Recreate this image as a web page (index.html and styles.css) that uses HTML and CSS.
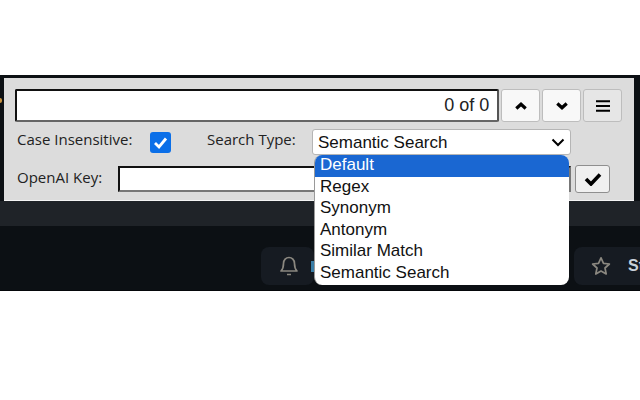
FILE: index.html
```html
<!DOCTYPE html>
<html>
    <head>
        <meta charset="UTF-8">
        <title>Search panel</title>
        <link rel="stylesheet" href="styles.css">
    </head>
    <body>
        <div class="stage">
            <div class="edgeMark"></div>
            <div class="panel">
                <div class="searchRow">
                    <div class="searchBox">0 of 0</div>
                    <button class="btn">
                        <svg width="12" height="8" viewBox="0 0 12 8"><path d="M1.3 6.5 L6 2.2 L10.7 6.5" fill="none" stroke="#000" stroke-width="3.2"/></svg>
                    </button>
                    <button class="btn">
                        <svg width="12" height="8" viewBox="0 0 12 8"><path d="M1.3 1.5 L6 5.8 L10.7 1.5" fill="none" stroke="#000" stroke-width="3.2"/></svg>
                    </button>
                    <button class="btn btnMenu">
                        <svg width="14" height="12" viewBox="0 0 14 12"><path d="M0 1.2 H14 M0 6 H14 M0 10.8 H14" fill="none" stroke="#000" stroke-width="2"/></svg>
                    </button>
                </div>
                <div class="optionsRow">
                    <span class="lbl lblCase">Case Insensitive:</span>
                    <span class="checkbox">
                        <svg width="21" height="21" viewBox="0 0 21 21"><path d="M5 11 L9 15 L16 6.5" fill="none" stroke="#fff" stroke-width="2.8"/></svg>
                    </span>
                    <span class="lbl lblType">Search Type:</span>
                    <div class="selectBox">
                        <span>Semantic Search</span>
                        <svg width="14" height="9" viewBox="0 0 14 9"><path d="M1.5 1.5 L7 7 L12.5 1.5" fill="none" stroke="#000" stroke-width="2"/></svg>
                    </div>
                </div>
                <div class="keyRow">
                    <span class="lbl lblKey">OpenAI Key:</span>
                    <div class="keyBox"></div>
                    <button class="btn btnOk">
                        <svg width="18" height="14" viewBox="0 0 18 14"><path d="M2 7 L7 12 L16 2.5" fill="none" stroke="#000" stroke-width="3.6"/></svg>
                    </button>
                </div>
            </div>

            <div class="dropdown">
                <div class="opt optSel">Default</div>
                <div class="opt">Regex</div>
                <div class="opt">Synonym</div>
                <div class="opt">Antonym</div>
                <div class="opt">Similar Match</div>
                <div class="opt">Semantic Search</div>
            </div>

            <div class="band"></div>
            <div class="toolbar">
                <div class="pill pillBell">
                    <svg width="20" height="22" viewBox="0 0 20 22"><path d="M2 16 C4 14 4.5 12 4.5 8.5 C4.5 5 7 2.5 10 2.5 C13 2.5 15.5 5 15.5 8.5 C15.5 12 16 14 18 16 Z M8 19.5 H12" fill="none" stroke="#8b8880" stroke-width="1.7" stroke-linejoin="round"/></svg>
                    <span class="blueMark"></span>
                </div>
                <div class="pill pillStar">
                    <svg width="20" height="20" viewBox="0 0 20 20"><path d="M10 1.8 L12.5 7.3 L18.4 8 L14 12 L15.2 18 L10 15 L4.8 18 L6 12 L1.6 8 L7.5 7.3 Z" fill="none" stroke="#8b8880" stroke-width="1.7" stroke-linejoin="round"/></svg>
                    <b>St</b>
                </div>
            </div>
        </div>
    </body>
</html>
```

FILE: styles.css
```css
body {
    margin: 0;
    background: #ffffff;
    font-family: "Open Sans", "Noto Sans", sans-serif;
    font-size: 15px;
    color: #000000;
}

.stage {
    position: relative;
    margin-top: 75px;
    height: 216px;
    background: #0c1014;
    overflow: hidden;
    border-bottom: 1px solid #05070a;
    box-sizing: border-box;
}

.edgeMark {
    position: absolute;
    left: 0;
    top: 23px;
    width: 2px;
    height: 5px;
    border-radius: 0 2px 2px 0;
    background: #c9933f;
}

.panel {
    position: absolute;
    left: 4px;
    top: 3px;
    width: 630px;
    height: 123px;
    box-sizing: border-box;
    padding: 11px 12px 0 11px;
    background: #dcdcdc;
    border-bottom: 1px solid #f4f4f4;
    z-index: 1;
}

.searchRow {
    display: flex;
    gap: 2px;
    height: 33px;
}

.searchBox {
    width: 485px;
    box-sizing: border-box;
    border: 2px solid #111111;
    border-bottom-color: #666666;
    border-right-color: #555555;
    border-radius: 2px;
    background: #ffffff;
    font-family: "Liberation Sans", Arial, sans-serif;
    font-size: 18px;
    line-height: 29px;
    text-align: right;
    padding-right: 8px;
    color: #222222;
}

.btn {
    width: 39px;
    height: 33px;
    padding: 0;
    display: flex;
    align-items: center;
    justify-content: center;
    border: 1px solid #bdbdbd;
    border-radius: 3px;
    background: #f8f8f8;
}

.btnMenu {
    background: #e6e6e6;
}

.optionsRow {
    display: flex;
    align-items: center;
    height: 26px;
    margin-top: 7px;
}

.lbl {
    color: #222222;
    white-space: nowrap;
}

.lblCase {
    margin-left: 2px;
    width: 133px;
    position: relative;
    top: -3px;
}

.checkbox {
    width: 21px;
    height: 21px;
    border-radius: 3px;
    background: #0b6fe8;
    margin-top: 1px;
}

.checkbox svg {
    display: block;
}

.lblType {
    margin-left: 36px;
    width: 105px;
    position: relative;
    top: -3px;
}

.selectBox {
    width: 259px;
    height: 26px;
    box-sizing: border-box;
    display: flex;
    align-items: center;
    justify-content: space-between;
    padding: 1px 5px 0 5px;
    background: #ffffff;
    border: 1px solid #b5b5b5;
    border-radius: 3px;
    font-family: "Liberation Sans", Arial, sans-serif;
    font-size: 17px;
    color: #111111;
}

.keyRow {
    display: flex;
    align-items: center;
    margin-top: 10px;
}

.lblKey {
    margin-left: 2px;
    width: 101px;
    position: relative;
    top: -2px;
}

.keyBox {
    width: 453px;
    height: 26px;
    box-sizing: border-box;
    background: #ffffff;
    border: 2px solid #111111;
    border-bottom-color: #777777;
    border-right-color: #777777;
}

.btnOk {
    width: 35px;
    height: 28px;
    margin-left: 4px;
    background: #f0f0f0;
    border-color: #8f8f8f;
}

.dropdown {
    position: absolute;
    left: 314px;
    top: 80px;
    width: 255px;
    height: 130px;
    box-sizing: border-box;
    background: #ffffff;
    border-left: 1px solid #9a9a9a;
    border-radius: 8px;
    overflow: hidden;
    z-index: 2;
    font-family: "Liberation Sans", Arial, sans-serif;
    font-size: 17px;
    color: #111111;
}

.opt {
    height: 21.5px;
    line-height: 20px;
    padding-left: 5px;
}

.optSel {
    background: #1a67d2;
    color: #ffffff;
}

.band {
    position: absolute;
    left: 0;
    right: 0;
    top: 126px;
    height: 25px;
    background: #1f2328;
}

.toolbar {
    position: absolute;
    left: 261px;
    right: 0;
    top: 172px;
    display: flex;
    gap: 260px;
}

.pill {
    height: 38px;
    box-sizing: border-box;
    display: flex;
    align-items: center;
    background: #161b22;
    border-radius: 8px;
    color: #c9d1d9;
}

.pillBell {
    width: 53px;
    padding-left: 18px;
    gap: 12px;
}

.blueMark {
    width: 3px;
    height: 11px;
    flex: none;
    background: #3a7ea8;
}

.pillStar {
    flex: 1;
    border-radius: 8px 0 0 8px;
    padding-left: 17px;
    gap: 17px;
}

.pillStar b {
    font-family: "Liberation Sans", Arial, sans-serif;
    font-size: 16px;
}
```
